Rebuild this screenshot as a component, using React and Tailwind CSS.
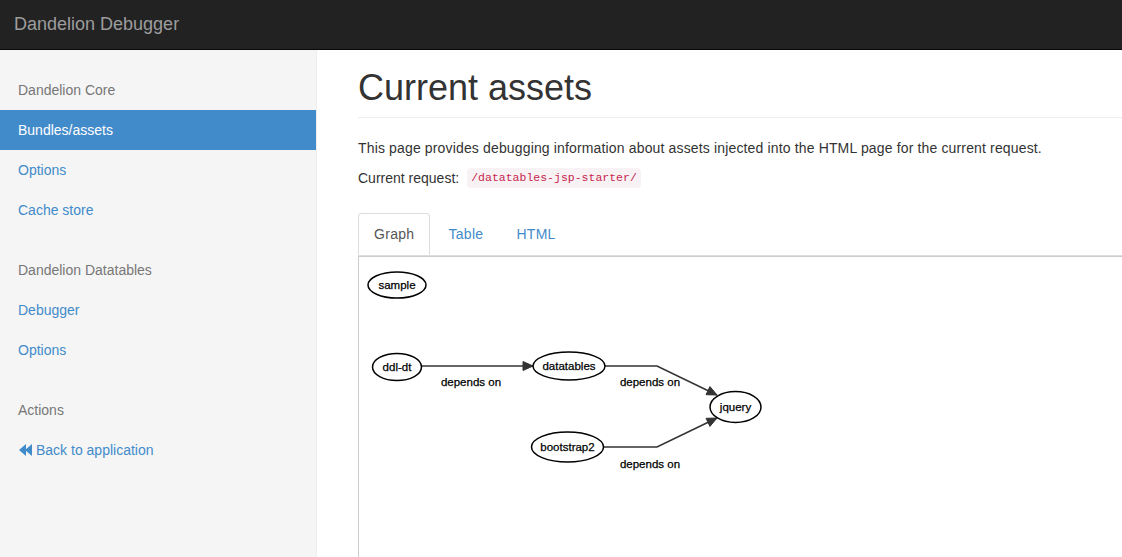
const menu = [
  {
    title: 'Dandelion Core',
    links: [
      { label: 'Bundles/assets', active: true },
      { label: 'Options' },
      { label: 'Cache store' },
    ],
  },
  {
    title: 'Dandelion Datatables',
    links: [{ label: 'Debugger' }, { label: 'Options' }],
  },
]

const nodes = [
  { id: 'sample', x: 397, y: 284, rx: 29, ry: 13 },
  { id: 'ddl-dt', x: 397, y: 366, rx: 24.5, ry: 13.5 },
  { id: 'datatables', x: 569, y: 365, rx: 36, ry: 14 },
  { id: 'jquery', x: 735.5, y: 406, rx: 25.5, ry: 15.5 },
  { id: 'bootstrap2', x: 567.5, y: 446, rx: 36, ry: 15 },
]

const edges = [
  { points: [[422, 365], [533, 365]], label: [471, 385] },
  { points: [[605, 365], [657, 365], [717, 394]], label: [650, 385] },
  { points: [[603, 446], [657, 446], [717, 417]], label: [650, 467] },
]

const arrowHead = (from, tip) => {
  const dx = tip[0] - from[0]
  const dy = tip[1] - from[1]
  const len = Math.hypot(dx, dy)
  const ux = dx / len
  const uy = dy / len
  const bx = tip[0] - ux * 10
  const by = tip[1] - uy * 10
  return `${tip[0]},${tip[1]} ${bx - uy * 4.5},${by + ux * 4.5} ${bx + uy * 4.5},${by - ux * 4.5}`
}

const Graph = () => {
  return (
    <svg width="800" height="310" className="block">
      <g transform="translate(-359,-256)" fontFamily="'Liberation Sans', Arial, sans-serif" fontSize="11.5">
        {edges.map((e, i) => {
          const pts = e.points
          return (
            <g key={i}>
              <polyline
                points={pts.map((p) => p.join(',')).join(' ')}
                fill="none"
                stroke="#333"
                strokeWidth="1.6"
              />
              <polygon points={arrowHead(pts[pts.length - 2], pts[pts.length - 1])} fill="#333" stroke="#333" strokeWidth="1" />
              <text x={e.label[0]} y={e.label[1]} textAnchor="middle" fill="#000" stroke="#000" strokeWidth="0.25">depends on</text>
            </g>
          )
        })}
        {nodes.map((n) => (
          <g key={n.id}>
            <ellipse cx={n.x} cy={n.y} rx={n.rx} ry={n.ry} fill="#fff" stroke="#000" strokeWidth="1.5" />
            <text x={n.x} y={n.y + 4} textAnchor="middle" fill="#000" stroke="#000" strokeWidth="0.25">{n.id}</text>
          </g>
        ))}
      </g>
    </svg>
  )
}

const App = () => {
  return (
    <div className="h-screen overflow-hidden bg-white text-[14px] text-[#333] font-['Liberation_Sans',Arial,sans-serif]">
      <div className="h-[50px] bg-[#222] border-b border-[#080808] flex items-center px-[14px]">
        <span className="text-[18px] text-[#9d9d9d]">Dandelion Debugger</span>
      </div>
      <div className="flex h-[507px]">
        <div className="w-[317px] shrink-0 bg-[#f5f5f5] border-r border-[#eee] pt-[20px]">
          {menu.map((group) => (
            <div key={group.title} className="mb-[20px]">
              <div className="h-[40px] flex items-center pl-[18px] text-[#777]">{group.title}</div>
              {group.links.map((link) => (
                <div
                  key={link.label}
                  className={
                    link.active
                      ? 'h-[40px] flex items-center pl-[18px] bg-[#428bca] text-white'
                      : 'h-[40px] flex items-center pl-[18px] text-[#428bca]'
                  }
                >
                  {link.label}
                </div>
              ))}
            </div>
          ))}
          <div>
            <div className="h-[40px] flex items-center pl-[18px] text-[#777]">Actions</div>
            <div className="h-[40px] flex items-center pl-[19px] text-[#428bca] gap-[3px]">
              <svg width="14" height="12" viewBox="0 0 14 12" fill="#428bca">
                <polygon points="0,6 7,0 7,12" />
                <polygon points="6,6 13,0 13,12" />
              </svg>
              <span>Back to application</span>
            </div>
          </div>
        </div>
        <div className="flex-1 pl-[41px] pt-[18px] min-w-0">
          <div className="border-b border-[#eee] pb-[9px]">
            <h1 className="text-[36px] leading-[40px] font-medium text-[#333]">Current assets</h1>
          </div>
          <p className="mt-[20px] mb-[10px] leading-[20px] tracking-[0.15px]">
            This page provides debugging information about assets injected into the HTML page for the current request.
          </p>
          <p className="leading-[20px] flex items-center">
            <span>Current request:</span>
            <code className="ml-[8px] px-[4px] py-[2px] rounded-[4px] bg-[#f9f2f4] text-[#c7254e] text-[11.5px] leading-[16px] font-['Liberation_Mono','DejaVu_Sans_Mono',monospace]">
              /datatables-jsp-starter/
            </code>
          </p>
          <div className="mt-[25px] flex border-b border-[#ddd] tracking-[0.3px]">
            <div className="h-[42px] -mb-px flex items-center px-[15px] bg-white border border-[#ddd] border-b-transparent rounded-t-[4px] text-[#555] mr-[3px]">
              Graph
            </div>
            <div className="h-[42px] flex items-center px-[15px] text-[#428bca] mr-[3px]">Table</div>
            <div className="h-[42px] flex items-center px-[15px] text-[#428bca]">HTML</div>
          </div>
          <div className="border-t border-l border-[#ccc] h-[320px]">
            <Graph />
          </div>
        </div>
      </div>
    </div>
  )
}

export default App
